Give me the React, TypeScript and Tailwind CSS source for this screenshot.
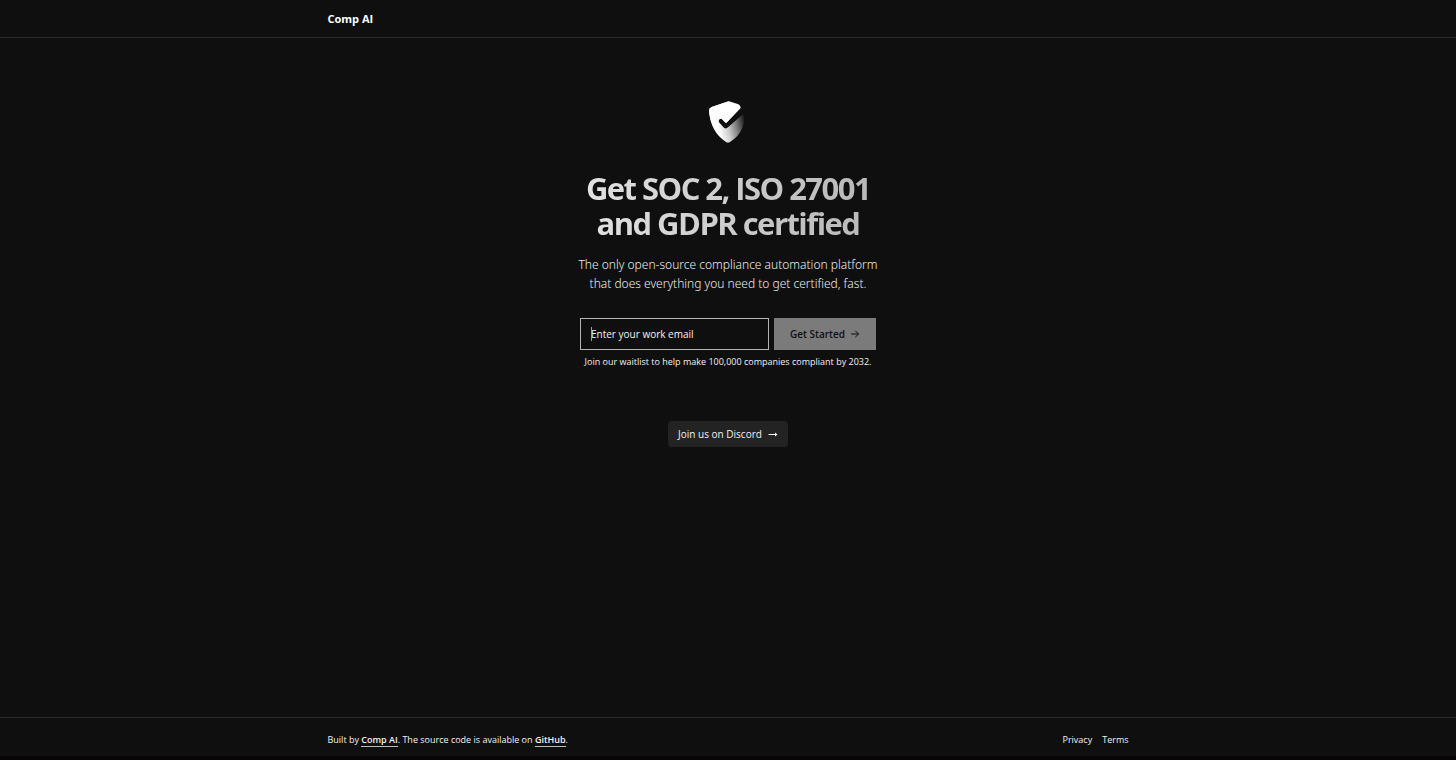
import React from "react";

function Logo() {
  return (
    <svg width="40" height="44" viewBox="54 26 120 132" role="img" aria-label="Comp AI shield">
      <defs>
        <linearGradient id="shield" gradientUnits="userSpaceOnUse" x1="84" y1="108" x2="166" y2="88">
          <stop offset="0" stopColor="#ffffff" />
          <stop offset="0.3" stopColor="#d2d2d2" />
          <stop offset="0.65" stopColor="#7c7c7c" />
          <stop offset="1" stopColor="#0f0f0f" />
        </linearGradient>
      </defs>
      <path
        d="M57 62Q57 53 65 50L111 34Q116 32 121 34L145 42Q152 45 152 53L111 96Q108 99 105 96L98 88Q93 83 88 87Q84 92 89 98L102 112Q108 117 114 111L164 67Q166 90 157 113Q146 139 121 154Q114 159 107 154Q62 125 57 62Z"
        fill="url(#shield)"
      />
      <path d="M57 62Q57 53 65 50L111 34Q116 32 121 34L145 42Q152 45 152 53L111 96Q108 99 105 96L98 88Q93 83 88 87L70 110Q59 87 57 62Z" fill="#ffffff" />
    </svg>
  );
}

function ArrowRight() {
  return (
    <svg width="10" height="10" viewBox="0 0 10 10" fill="none" stroke="currentColor" strokeLinecap="round" strokeLinejoin="round" aria-hidden="true">
      <path d="M1.5 5h7M5.5 2 8.5 5 5.5 8" />
    </svg>
  );
}

function LongArrow() {
  return (
    <svg width="10" height="6" viewBox="0 0 10 6" fill="none" stroke="currentColor" aria-hidden="true">
      <path d="M0.5 3.5h8" />
      <path d="M7 1.5 9.5 3.5 7 5.5Z" fill="currentColor" stroke="none" />
    </svg>
  );
}

export default function App() {
  return (
    <div className="flex min-h-screen flex-col border-b-4 border-[#090405] bg-[#0f0f0f] font-['Open_Sans',sans-serif] text-[#f2f2f2]">
      <header className="border-b border-[#2b2b2b]">
        <div className="mx-auto flex h-[37px] max-w-[801px] items-center pt-[2px]">
          <a href="#home" className="text-[11px] font-bold text-white">Comp AI</a>
        </div>
      </header>

      <main className="flex flex-1 flex-col items-center pt-[61px] text-center">
        <Logo />
        <h1 className="mt-7 bg-linear-to-r from-[#e2e2e2] to-[#b8b8b8] bg-clip-text text-[31px] leading-[35px] font-bold tracking-tighter text-transparent">
          Get SOC 2, ISO 27001
          <br />
          and GDPR certified
        </h1>
        <p className="mt-[14px] font-['Noto_Sans',sans-serif] text-[12px] leading-[19px] font-light text-[#ededed]">
          The only open-source compliance automation platform
          <br />
          that does everything you need to get certified, fast.
        </p>
        <form className="mt-[25px] flex gap-[5px]" onSubmit={(e) => e.preventDefault()}>
          <div className="relative">
            <input
              type="email"
              aria-label="Work email"
              placeholder="Enter your work email"
              className="block h-8 w-[189px] border border-[#b4b4b4] bg-transparent px-[10px] text-[10px] outline-none placeholder:text-[#f2f2f2]"
            />
            <span className="absolute top-[9px] left-[11px] h-[14px] w-px bg-[#a0a0a0]" aria-hidden="true" />
          </div>
          <button type="submit" className="flex h-8 w-[102px] items-center justify-center gap-[5px] bg-[#7b7b7b] text-[10px] font-semibold text-[#0f0f0f]">
            Get Started
            <ArrowRight />
          </button>
        </form>
        <p className="mt-1 text-[9px] leading-4">Join our waitlist to help make 100,000 companies compliant by 2032.</p>
        <a href="#discord" className="mt-[51px] flex h-[26px] items-center gap-[6px] rounded bg-[#232323] px-[10px] text-[10px] font-medium">
          Join us on Discord
          <LongArrow />
        </a>
      </main>

      <footer className="border-t border-[#2b2b2b]">
        <div className="mx-auto flex h-[38px] max-w-[801px] items-center justify-between pt-[6px] text-[9px]">
          <p>
            Built by <a href="#comp" className="border-b border-[#bdbdbd] font-semibold">Comp AI</a>. The source code is available on{" "}
            <a href="#github" className="border-b border-[#bdbdbd] font-semibold">GitHub</a>.
          </p>
          <nav className="flex gap-[10px]">
            <a href="#privacy">Privacy</a>
            <a href="#terms">Terms</a>
          </nav>
        </div>
      </footer>
    </div>
  );
}
